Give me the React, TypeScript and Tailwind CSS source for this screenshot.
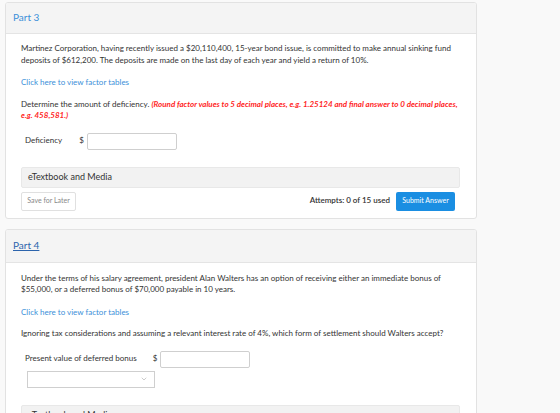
import { ChevronDown } from 'lucide-react';

function Link() {
  return <p className="mt-[11px] text-[#3a8fd9]">Click here to view factor tables</p>;
}

function AnswerRow({ label, gap }: { label: string; gap: string }) {
  return (
    <div className="flex items-center pl-[4px]">
      <span className="text-[#333]">{label}</span>
      <span className={`${gap} mr-[3px] text-[#333]`}>$</span>
      <div className="w-[90px] h-[17px] bg-white border border-[#cfcfcf] rounded-[2px]" />
    </div>
  );
}

export default function App() {
  return (
    <div
      className="w-[560px] h-[413px] overflow-hidden bg-[#f9f9f9] pl-[5px] pt-[2px] text-[8px] leading-[11.5px] text-[#333]"
      style={{ fontFamily: 'Lato, "Open Sans", sans-serif' }}
    >
      {/* Part 3 */}
      <div className="w-[472px] bg-white border border-[#e2e2e2] rounded-[3px] overflow-hidden">
        <div className="h-[31px] bg-[#f4f4f4] border-b border-[#e4e4e4] flex items-center px-[7px]">
          <span className="text-[10px] text-[#3a8fd9]">Part 3</span>
        </div>
        <div className="px-[15px] pt-[9px] pb-[7px]">
          <p>
            Martinez Corporation, having recently issued a $20,110,400, 15-year bond issue, is committed to make annual sinking fund
            deposits of $612,200. The deposits are made on the last day of each year and yield a return of 10%.
          </p>
          <Link />
          <p className="mt-[10px]">
            Determine the amount of deficiency.{' '}
            <span className="text-[#ff1f1f] font-bold italic">
              (Round factor values to 5 decimal places, e.g. 1.25124 and final answer to 0 decimal places, e.g. 458,581.)
            </span>
          </p>
          <div className="mt-[11px]">
            <AnswerRow label="Deficiency" gap="ml-[17px]" />
          </div>
          <div className="mt-[17px] h-[21px] bg-[#f2f2f2] border border-[#e8e8e8] rounded-[2px] flex items-center px-[6px] mr-[1px]">
            <span className="text-[9px] text-[#333]">eTextbook and Media</span>
          </div>
          <div className="mt-[4px] flex items-center justify-between pr-[6px]">
            <button className="h-[19px] w-[55px] bg-white border border-[#e0e0e0] rounded-[2px] text-[7px] text-[#888]">
              Save for Later
            </button>
            <div className="flex items-center gap-[6px]">
              <span className="font-semibold text-[#333]">Attempts: 0 of 15 used</span>
              <button className="h-[19px] w-[59px] bg-[#1a8ee2] rounded-[2px] text-[7px] text-white">
                Submit Answer
              </button>
            </div>
          </div>
        </div>
      </div>

      {/* Part 4 */}
      <div className="mt-[10px] w-[472px] bg-white border border-[#e2e2e2] rounded-[3px] overflow-hidden">
        <div className="h-[33px] bg-[#f4f4f4] border-b border-[#e4e4e4] flex items-center px-[7px]">
          <span className="text-[10px] text-[#2c64ac] underline">Part 4</span>
        </div>
        <div className="px-[15px] pt-[10px] pb-[8px]">
          <p>
            Under the terms of his salary agreement, president Alan Walters has an option of receiving either an immediate bonus of
            $55,000, or a deferred bonus of $70,000 payable in 10 years.
          </p>
          <Link />
          <p className="mt-[10px]">
            Ignoring tax considerations and assuming a relevant interest rate of 4%, which form of settlement should Walters accept?
          </p>
          <div className="mt-[11px]">
            <AnswerRow label="Present value of deferred bonus" gap="ml-[16px]" />
          </div>
          <div className="mt-[3px] ml-[6px] w-[128px] h-[17px] bg-white border border-[#cfcfcf] flex items-center justify-end pr-[6px]">
            <ChevronDown className="w-[8px] h-[8px] text-[#999]" strokeWidth={1.5} />
          </div>
          <div className="mt-[17px] h-[21px] bg-[#f2f2f2] border border-[#e8e8e8] rounded-[2px] flex items-center px-[6px] mr-[1px]">
            <span className="text-[9px] text-[#333]">eTextbook and Media</span>
          </div>
        </div>
      </div>
    </div>
  );
}
